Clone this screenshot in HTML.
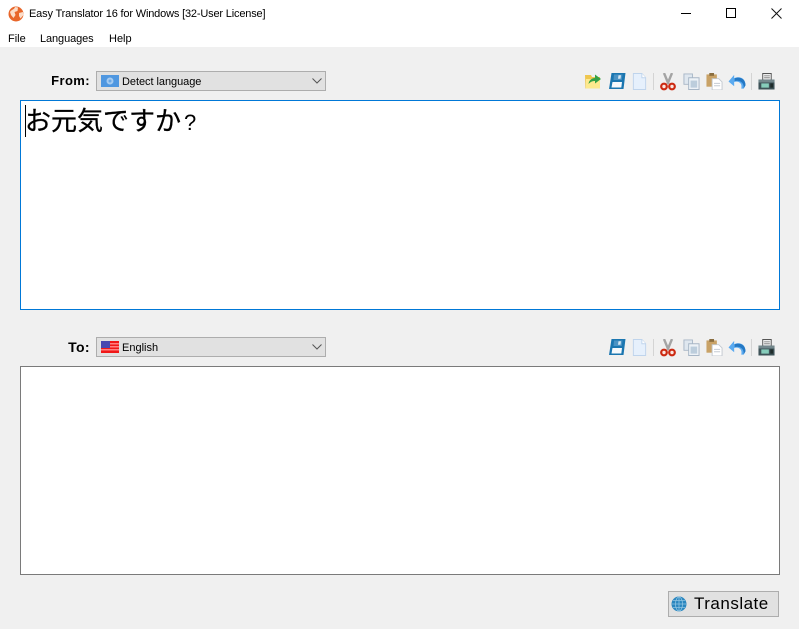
<!DOCTYPE html>
<html><head><meta charset="utf-8">
<style>
html,body{margin:0;padding:0}
body{width:799px;height:629px;overflow:hidden;position:relative;background:#f0f0f0;font-family:"Liberation Sans",Arial,sans-serif;color:#000}
.a{position:absolute;white-space:nowrap}
.t{font-size:11px;line-height:14px}
.combo{position:absolute;left:96px;width:228px;height:18px;background:#e1e1e1;border:1px solid #adadad}
.box{position:absolute;left:20px;width:758px;background:#fff}
.lab{font-size:13px;font-weight:bold;letter-spacing:.4px;line-height:16px;text-align:right;width:60px;left:30px}
svg{position:absolute;overflow:visible}
.i{filter:blur(.35px)}
</style></head><body>
<svg width="0" height="0" style="position:absolute">
<defs>
<symbol id="open" viewBox="0 0 18 18"><path d="M1 3h6l1 2h8v11.500H1.500z" fill="#efc64e"/><path d="M2 7h14v9.500H2z" fill="#fde98e"/><path d="M4.500 12c.5-4 3.500-6 6.500-6V2.500l6 4.500-6 4.500V9c-3 0-4.500 1-6.500 3z" fill="#35a045"/></symbol>
<symbol id="save" viewBox="0 0 18 18"><path d="M3.500 1H17.500L15.500 17H1z" fill="#1b76b0"/><path d="M6 2.500h8.500l-.8 5.500H5.500z" fill="#4b93c4"/><path d="M10.500 3.200h2.500l-.5 3.600h-2.500z" fill="#d7e8f4"/><path d="M4.500 10h9.500l-.7 5.500H3.500z" fill="#f6f9fc"/></symbol>
<symbol id="new" viewBox="0 0 18 18"><path d="M2.500 .5h9l4 4.500v12.500h-13z" fill="#e6f0fc" stroke="#bfd4ec"/><path d="M11.500 .5V5h4" fill="#fff" stroke="#bfd4ec"/></symbol>
<symbol id="cut" viewBox="0 0 18 18"><path d="M5 0l4.500 11M13 0L8.500 11" stroke="#a4a4a4" stroke-width="2.400" fill="none"/><circle cx="5" cy="13.500" r="2.800" fill="#fbe6e0" stroke="#cc2a12" stroke-width="2.200"/><circle cx="13" cy="13.500" r="2.800" fill="#fbe6e0" stroke="#cc2a12" stroke-width="2.200"/></symbol>
<symbol id="copy" viewBox="0 0 18 18"><path d="M1 1h9v11H1z" fill="#dfe7ef" stroke="#a7b6c6"/><path d="M6 5h11v12.500H6z" fill="#edf2f7" stroke="#a7b6c6"/><path d="M8 8h7v7.500H8z" fill="#bccddc"/></symbol>
<symbol id="paste" viewBox="0 0 18 18"><path d="M.5 1.500h11v13H.5z" fill="#c9a266"/><path d="M3.500 0h5v3h-5z" fill="#8a6d3f"/><path d="M6.500 6h7l3.500 3.500v8.500H6.500z" fill="#fff" stroke="#c3c9d0"/><path d="M8.500 11h6.500M8.500 13.500h6.500" stroke="#c5ccd4"/></symbol>
<symbol id="undo" viewBox="0 0 18 18"><path d="M0 9l6-7v3.500c6-2.500 12 0 12 7.500l-2 3.500h-2.500c1.500-5.500-2.500-8.500-7.500-7v4.500z" fill="#5aaaf0"/><path d="M6.500 5.500c5.500-2 11.500.5 11.500 7.500l-2 3.500c1-6-4-9.500-9.500-8z" fill="#2478c4"/></symbol>
<symbol id="print" viewBox="0 0 18 18"><path d="M5 .5h9v7H5z" fill="#eee" stroke="#555"/><path d="M6.500 3h6M6.500 5h6" stroke="#888"/><path d="M.5 7h17v10.500H.5z" fill="#3e5358"/><path d="M.5 7h17v3H.5z" fill="#73878c"/><path d="M3.500 11h8v4.500h-8z" fill="#86cdbb"/><path d="M13 11h3v4.500h-3z" fill="#1f2c2b"/></symbol>
</defs>
</svg>

<!-- title bar -->
<div class="a" style="left:0;top:0;width:799px;height:47px;background:#fff"></div>
<svg style="left:8px;top:6px" width="16" height="16" viewBox="0 0 16 16"><circle cx="8" cy="8" r="7.500" fill="#e8662a"/><path d="M2 6c2-3 4-2 5-5l3 .5-.5 3.500-3 1 1 3-2 3-2.500-3zM11 7l4-1 .5 3-3 3.500-1.500-2.500z" fill="#fbdcc8"/></svg>
<div class="a t" style="left:29px;top:7px;letter-spacing:-.17px">Easy Translator 16 for Windows [32-User License]</div>
<div class="a" style="left:681px;top:13px;width:10px;height:1px;background:#000"></div>
<div class="a" style="left:726px;top:8px;width:8px;height:8px;border:1px solid #000"></div>
<svg style="left:771px;top:8px" width="11" height="11"><path d="M.5.500l10 10M10.500.500l-10 10" stroke="#111" fill="none"/></svg>

<!-- menu -->
<div class="a t" style="left:8px;top:32px">File</div>
<div class="a t" style="left:40px;top:32px;letter-spacing:-.1px">Languages</div>
<div class="a t" style="left:109px;top:32px">Help</div>

<!-- from row -->
<div class="a lab" style="top:73px">From:</div>
<div class="combo" style="top:71px"></div>
<svg style="left:101px;top:75px" width="18" height="12"><rect width="18" height="12" fill="#4f97e0"/><circle cx="9" cy="6" r="3.500" fill="#a6cbf0"/><circle cx="9" cy="6" r="1.500" fill="#6aa8e6"/></svg>
<div class="a t" style="left:122px;top:75px;letter-spacing:-.05px">Detect language</div>
<svg style="left:312px;top:78px" width="10" height="6"><path d="M.5.500L5 5 9.500.500" fill="none" stroke="#555"/></svg>

<svg class="i" style="left:584px;top:72px" width="18" height="18"><use href="#open"/></svg>
<svg class="i" style="left:608px;top:72px" width="18" height="18"><use href="#save"/></svg>
<svg class="i" style="left:631px;top:73px" width="17" height="17"><use href="#new"/></svg>
<div class="a" style="left:653px;top:73px;width:1px;height:17px;background:#d4d4d4"></div>
<svg class="i" style="left:659px;top:73px" width="18" height="18"><use href="#cut"/></svg>
<svg class="i" style="left:683px;top:73px" width="17" height="17"><use href="#copy"/></svg>
<svg class="i" style="left:706px;top:73px" width="17" height="17"><use href="#paste"/></svg>
<svg class="i" style="left:728px;top:73px" width="18" height="17"><use href="#undo"/></svg>
<div class="a" style="left:751px;top:73px;width:1px;height:17px;background:#d4d4d4"></div>
<svg class="i" style="left:758px;top:73px" width="17" height="17"><use href="#print"/></svg>

<!-- source box -->
<div class="box" style="top:100px;height:208px;border:1px solid #0078d7"></div>
<div class="a" style="left:25px;top:105px;width:1px;height:32px;background:#000"></div>
<div class="a" style="left:25px;top:102px;font-family:'Liberation Sans','WenQuanYi Zen Hei','Noto Sans CJK JP',sans-serif;font-size:26px;line-height:38px;-webkit-text-stroke:.3px #000">お元気ですか<span style="font-size:22px;margin-left:3px;-webkit-text-stroke:0">?</span></div>

<!-- to row -->
<div class="a lab" style="top:339px;font-size:14px">To:</div>
<div class="combo" style="top:337px"></div>
<svg style="left:101px;top:341px" width="18" height="12"><rect width="18" height="12" fill="#fff"/><path d="M0 0h18v2H0zM0 3.500h18v1.500H0zM0 6.500h18v1.500H0zM0 9.500h18V12H0z" fill="#f01818"/><rect y="2" x="0" width="18" height="1.500" fill="#ff8080"/><rect y="5" width="18" height="1.500" fill="#ff8080"/><rect y="8" width="18" height="1.500" fill="#ff8080"/><rect width="9" height="7" fill="#4848b0"/></svg>
<div class="a t" style="left:122px;top:341px">English</div>
<svg style="left:312px;top:344px" width="10" height="6"><path d="M.5.500L5 5 9.500.500" fill="none" stroke="#555"/></svg>

<svg class="i" style="left:608px;top:338px" width="18" height="18"><use href="#save"/></svg>
<svg class="i" style="left:631px;top:339px" width="17" height="17"><use href="#new"/></svg>
<div class="a" style="left:653px;top:339px;width:1px;height:17px;background:#d4d4d4"></div>
<svg class="i" style="left:659px;top:339px" width="18" height="18"><use href="#cut"/></svg>
<svg class="i" style="left:683px;top:339px" width="17" height="17"><use href="#copy"/></svg>
<svg class="i" style="left:706px;top:339px" width="17" height="17"><use href="#paste"/></svg>
<svg class="i" style="left:728px;top:339px" width="18" height="17"><use href="#undo"/></svg>
<div class="a" style="left:751px;top:339px;width:1px;height:17px;background:#d4d4d4"></div>
<svg class="i" style="left:758px;top:339px" width="17" height="17"><use href="#print"/></svg>

<!-- target box -->
<div class="box" style="top:366px;height:207px;border:1px solid #7a7a7a"></div>

<!-- translate -->
<div class="a" style="left:668px;top:591px;width:109px;height:24px;background:#e1e1e1;border:1px solid #adadad"></div>
<svg style="left:671px;top:596px" width="16" height="16" viewBox="0 0 16 16"><circle cx="8" cy="8" r="7.500" fill="#2a86bf"/><g fill="none" stroke="#8fc4e2" stroke-width=".8"><ellipse cx="8" cy="8" rx="3.500" ry="7"/><path d="M8 1v14M1 8h14M2 4.500h12M2 11.500h12"/></g></svg>
<div class="a" style="left:694px;top:595px;font-size:17px;line-height:18px;letter-spacing:.5px">Translate</div>
</body></html>
